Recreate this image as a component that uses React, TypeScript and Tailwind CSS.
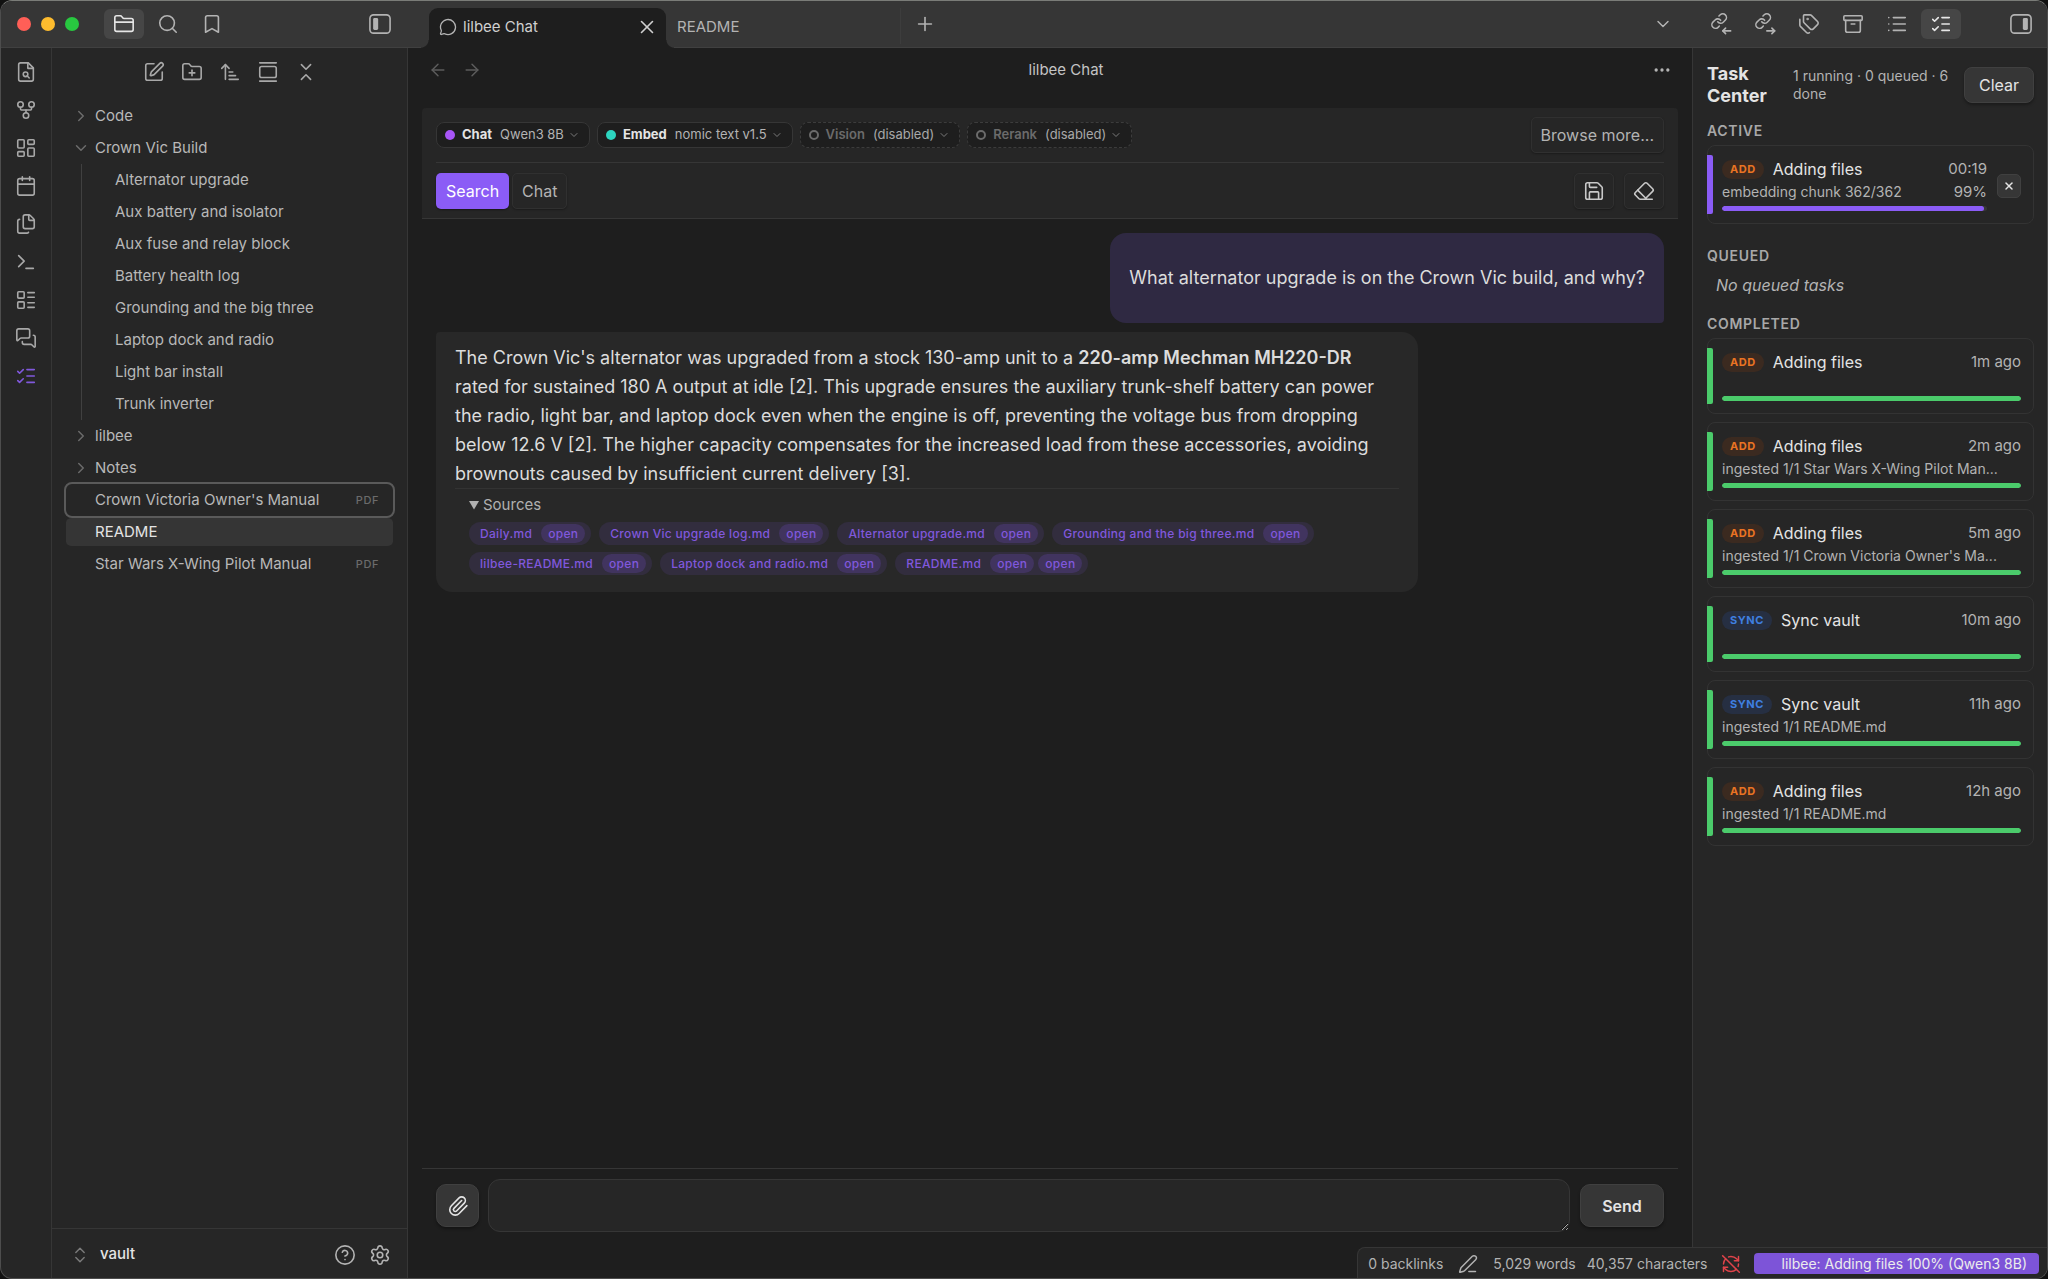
import type { ReactNode } from "react";
import {
  Archive,
  ArrowLeft,
  ArrowRight,
  ArrowUpNarrowWide,
  Bookmark,
  Calendar,
  ChevronDown,
  ChevronRight,
  ChevronsDownUp,
  ChevronsUpDown,
  CircleHelp,
  Ellipsis,
  Eraser,
  Files,
  FolderClosed,
  FolderPlus,
  GalleryVertical,
  GitFork,
  LayoutDashboard,
  LayoutList,
  List,
  ListChecks,
  MessageCircle,
  MessagesSquare,
  Paperclip,
  PenLine,
  Plus,
  RefreshCwOff,
  Save,
  Search,
  Settings,
  SquarePen,
  Tags,
  Terminal,
  X,
} from "lucide-react";

const icon = { size: 22, strokeWidth: 1.75 };

function Svg({ children }: { children: ReactNode }) {
  return (
    <svg
      width="22"
      height="22"
      viewBox="0 0 24 24"
      fill="none"
      stroke="currentColor"
      strokeWidth="1.75"
      strokeLinecap="round"
      strokeLinejoin="round"
      aria-hidden="true"
    >
      {children}
    </svg>
  );
}

function SidebarToggle({ side }: { side: "left" | "right" }) {
  return (
    <Svg>
      <rect x="1" y="2" width="22" height="20" rx="4" />
      <rect x={side === "left" ? 4.5 : 14} y="5.5" width="5.5" height="13" rx="1.5" fill="currentColor" stroke="none" />
    </Svg>
  );
}

function LinkArrow({ direction }: { direction: "in" | "out" }) {
  return (
    <Svg>
      <g transform="translate(0.4 -0.8) scale(0.8)" strokeWidth="2.1">
        <path d="M10 13a5 5 0 0 0 7.54.54l3-3a5 5 0 0 0-7.07-7.07l-1.72 1.71" />
        <path d="M14 11a5 5 0 0 0-7.54-.54l-3 3a5 5 0 0 0 7.07 7.07l1.71-1.71" />
      </g>
      <path d="M14 19.5h8.5" />
      <path d={direction === "in" ? "m17 16.5-3 3 3 3" : "m19.5 16.5 3 3-3 3"} />
    </Svg>
  );
}

function FileSearch() {
  return (
    <Svg>
      <path d="M14.5 2H6a2 2 0 0 0-2 2v16a2 2 0 0 0 2 2h12a2 2 0 0 0 2-2V7.5z" />
      <path d="M14 2v6h6" />
      <circle cx="11.5" cy="14.5" r="2.5" />
      <path d="M13.4 16.4 15.5 18.5" />
    </Svg>
  );
}

function IconButton({ label, active, children }: { label: string; active?: boolean; children: ReactNode }) {
  return (
    <button
      type="button"
      aria-label={label}
      className={
        active
          ? "flex h-[30px] w-10 items-center justify-center rounded-md bg-[#464646] text-[#e6e6e6]"
          : "flex h-[30px] w-10 items-center justify-center rounded-md text-[#b3b3b3]"
      }
    >
      {children}
    </button>
  );
}

function TitleBar() {
  return (
    <header className="flex h-[47px] shrink-0 border-b border-[#404040] bg-[#363636]">
      <div className="flex w-[406px] shrink-0 items-center justify-between pr-[7px] pb-px pl-4">
        <div className="flex items-center">
          <div className="mr-[25px] flex gap-[10px]">
            <span className="size-[14px] rounded-full bg-[#ff5f57]" />
            <span className="size-[14px] rounded-full bg-[#febc2e]" />
            <span className="size-[14px] rounded-full bg-[#28c840]" />
          </div>
          <div className="flex gap-1">
            <IconButton label="Files" active><FolderClosed {...icon} /></IconButton>
            <IconButton label="Search"><Search {...icon} /></IconButton>
            <IconButton label="Bookmarks"><Bookmark {...icon} /></IconButton>
          </div>
        </div>
        <IconButton label="Collapse sidebar"><SidebarToggle side="left" /></IconButton>
      </div>
      <div className="flex min-w-0 flex-1 items-start pl-[22px]">
        <div className="relative mt-[7px] flex h-10 w-[237px] items-center rounded-t-[9px] bg-[#1e1e1e] pr-2 pb-[2px] pl-[10px] text-[#d0d0d0]">
          <span className="absolute bottom-0 -left-2 size-2 bg-[radial-gradient(circle_at_0_0,transparent_7px,#1e1e1e_8px)]" />
          <span className="absolute -right-2 bottom-0 size-2 bg-[radial-gradient(circle_at_100%_0,transparent_7px,#1e1e1e_8px)]" />
          <MessageCircle size={18} strokeWidth={1.75} className="mr-[6px] text-[#b3b3b3]" />
          <span className="flex-1">lilbee Chat</span>
          <button type="button" aria-label="Close tab"><X size={22} strokeWidth={1.75} /></button>
        </div>
        <button type="button" className="mt-[7px] flex h-9 w-[235px] items-center border-r border-[#3d3d3d] pt-[2px] pl-[11px] text-[#b3b3b3]">
          README
        </button>
        <div className="mt-2 ml-1">
          <IconButton label="New tab"><Plus {...icon} /></IconButton>
        </div>
      </div>
      <div className="flex shrink-0 items-center pr-[6px] pb-px">
        <div className="mr-[18px]"><IconButton label="Tab list"><ChevronDown size={20} strokeWidth={1.75} /></IconButton></div>
        <div className="flex gap-1">
          <IconButton label="Backlinks"><LinkArrow direction="in" /></IconButton>
          <IconButton label="Outgoing links"><LinkArrow direction="out" /></IconButton>
          <IconButton label="Tags"><Tags {...icon} /></IconButton>
          <IconButton label="Archive"><Archive {...icon} /></IconButton>
          <IconButton label="Outline"><List {...icon} /></IconButton>
          <IconButton label="Task Center" active><ListChecks {...icon} /></IconButton>
        </div>
        <div className="ml-10"><IconButton label="Collapse right sidebar"><SidebarToggle side="right" /></IconButton></div>
      </div>
    </header>
  );
}

function Rail() {
  const items: [string, ReactNode][] = [
    ["Quick switcher", <FileSearch />],
    ["Graph view", <GitFork {...icon} />],
    ["Canvas", <LayoutDashboard {...icon} />],
    ["Daily note", <Calendar {...icon} />],
    ["Templates", <Files {...icon} />],
    ["Command palette", <Terminal {...icon} />],
    ["Bases", <LayoutList {...icon} />],
    ["Chat", <MessagesSquare {...icon} />],
  ];
  return (
    <nav className="flex w-[51px] shrink-0 flex-col items-center gap-4 border-r border-[#363636] pt-[13px] text-[#a8a8a8]">
      {items.map(([label, glyph]) => (
        <button key={label} type="button" aria-label={label}>{glyph}</button>
      ))}
      <button type="button" aria-label="Task Center" className="text-[#8058dc]"><ListChecks {...icon} /></button>
    </nav>
  );
}

function TreeRow({ name, kind, tag, state }: { name: string; kind?: "open" | "closed"; tag?: string; state?: "focused" | "active" }) {
  const look =
    state === "focused"
      ? "flex h-8 w-full items-center rounded-md pr-[14px] text-left outline-2 outline-[#5a5a5a]"
      : state === "active"
        ? "flex h-8 w-full items-center rounded-md border-y-2 border-transparent bg-[#353535] bg-clip-padding pr-[14px] text-left text-[#e4e4e4]"
        : "flex h-8 w-full items-center pr-[14px] text-left";
  return (
    <button type="button" className={look}>
      <span className="flex w-[29px] shrink-0 justify-center pl-px text-[#6b6b6b]">
        {kind === "open" && <ChevronDown size={18} strokeWidth={2} />}
        {kind === "closed" && <ChevronRight size={18} strokeWidth={2} />}
      </span>
      <span className="flex-1">{name}</span>
      {tag && <span className="text-[11px] font-medium tracking-wider text-[#6b6b6b]">{tag}</span>}
    </button>
  );
}

const crownVicNotes = [
  "Alternator upgrade",
  "Aux battery and isolator",
  "Aux fuse and relay block",
  "Battery health log",
  "Grounding and the big three",
  "Laptop dock and radio",
  "Light bar install",
  "Trunk inverter",
];

function FileExplorer() {
  return (
    <aside className="flex w-[356px] shrink-0 flex-col border-r border-[#363636]">
      <div className="flex justify-center gap-4 pt-[13px] text-[#a8a8a8]">
        <button type="button" aria-label="New note"><SquarePen {...icon} /></button>
        <button type="button" aria-label="New folder"><FolderPlus {...icon} /></button>
        <button type="button" aria-label="Sort order"><ArrowUpNarrowWide {...icon} /></button>
        <button type="button" aria-label="Auto-reveal file"><GalleryVertical {...icon} /></button>
        <button type="button" aria-label="Collapse all"><ChevronsDownUp {...icon} /></button>
      </div>
      <div className="flex-1 px-[14px] pt-[17px] text-[#b8b8b8]">
        <TreeRow name="Code" kind="closed" />
        <TreeRow name="Crown Vic Build" kind="open" />
        <div className="ml-[15px] border-l border-[#404040]">
          {crownVicNotes.map((note) => (
            <button key={note} type="button" className="flex h-8 w-full items-center pl-[33px] text-left">{note}</button>
          ))}
        </div>
        <TreeRow name="lilbee" kind="closed" />
        <TreeRow name="Notes" kind="closed" />
        <TreeRow name="Crown Victoria Owner's Manual" tag="PDF" state="focused" />
        <TreeRow name="README" state="active" />
        <TreeRow name="Star Wars X-Wing Pilot Manual" tag="PDF" />
      </div>
      <div className="flex h-[50px] shrink-0 items-center border-t border-[#363636] pt-[2px] pr-4 pl-[18px]">
        <button type="button" className="flex flex-1 items-center gap-[10px] font-medium text-[#e4e4e4]">
          <ChevronsUpDown size={20} strokeWidth={1.75} className="text-[#7a7a7a]" />
          vault
        </button>
        <div className="flex gap-[13px] text-[#b3b3b3]">
          <button type="button" aria-label="Help"><CircleHelp {...icon} /></button>
          <button type="button" aria-label="Settings"><Settings {...icon} /></button>
        </div>
      </div>
    </aside>
  );
}

function ModelChip({ role, model, dot }: { role: string; model: string; dot?: "purple" | "teal" }) {
  return (
    <button
      type="button"
      className={
        dot
          ? "flex h-[26px] items-center rounded-lg border border-[#363636] bg-[#1e1e1e] pr-[9px] pl-2 text-[13px] text-[#b3b3b3]"
          : "flex h-[26px] items-center rounded-lg border border-dashed border-[#3c3c3c] bg-[#1e1e1e] pr-[9px] pl-2 text-[13px] text-[#a8a8a8]"
      }
    >
      <span
        className={
          dot === "purple"
            ? "size-[10px] rounded-full bg-[#a855f7]"
            : dot === "teal"
              ? "size-[10px] rounded-full bg-[#2dd4bf]"
              : "size-[10px] rounded-full border-2 border-[#6b6b6b]"
        }
      />
      <span className={dot ? "mr-2 ml-[7px] font-bold text-[#e4e4e4]" : "mr-2 ml-[7px] font-semibold text-[#6b6b6b]"}>{role}</span>
      {model}
      <ChevronDown size={12} strokeWidth={2} className="ml-1 text-[#7a7a7a]" />
    </button>
  );
}

function Toolbar() {
  const flat = "rounded-[5px] border border-[#303030] shadow-[0_1px_2px_rgba(0,0,0,0.3)]";
  return (
    <div className="mx-[14px] rounded-t-sm border-b border-[#363636] bg-[#262626] px-[14px]">
      <div className="flex h-[55px] items-center gap-[7px] border-b border-[#363636]">
        <ModelChip role="Chat" model="Qwen3 8B" dot="purple" />
        <ModelChip role="Embed" model="nomic text v1.5" dot="teal" />
        <ModelChip role="Vision" model="(disabled)" />
        <ModelChip role="Rerank" model="(disabled)" />
        <button type="button" className={`${flat} ml-auto h-9 px-[9px] text-base text-[#b3b3b3]`}>Browse more...</button>
      </div>
      <div className="flex h-[55px] items-center gap-[3px]">
        <button type="button" className="h-9 rounded-[5px] bg-[#8b5cf6] px-[10px] text-base text-white shadow-[0_1px_2px_rgba(0,0,0,0.4)]">Search</button>
        <button type="button" className={`${flat} h-9 px-[9px] text-base text-[#b3b3b3]`}>Chat</button>
        <div className="ml-auto flex gap-[10px] text-[#c8c8c8]">
          <button type="button" aria-label="Save" className={`${flat} flex h-9 w-10 items-center justify-center`}><Save {...icon} /></button>
          <button type="button" aria-label="Clear chat" className={`${flat} flex h-9 w-10 items-center justify-center`}><Eraser {...icon} /></button>
        </div>
      </div>
    </div>
  );
}

const sources = [
  { name: "Daily.md", opens: 1 },
  { name: "Crown Vic upgrade log.md", opens: 1 },
  { name: "Alternator upgrade.md", opens: 1 },
  { name: "Grounding and the big three.md", opens: 1 },
  { name: "lilbee-README.md", opens: 1 },
  { name: "Laptop dock and radio.md", opens: 1 },
  { name: "README.md", opens: 2 },
];

function Conversation() {
  return (
    <div className="flex flex-1 flex-col px-7 pt-[14px] text-[#dcdcdc]">
      <div className="self-end rounded-2xl rounded-br-sm bg-[#2f2942] px-[19px] py-[31px] text-lg leading-7">
        What alternator upgrade is on the Crown Vic build, and why?
      </div>
      <div className="mt-[9px] w-[983px] max-w-[80%] rounded-2xl rounded-tl-sm bg-[#282828] px-[19px] pt-[11px] pb-[17px]">
        <p className="text-lg leading-[29px]">
          The Crown Vic's alternator was upgraded from a stock 130-amp unit to a <strong className="font-semibold">220-amp Mechman MH220-DR</strong> rated for sustained 180 A output at idle [2]. This upgrade ensures the auxiliary trunk-shelf battery can power the radio, light bar, and laptop dock even when the engine is off, preventing the voltage bus from dropping below 12.6 V [2]. The higher capacity compensates for the increased load from these accessories, avoiding brownouts caused by insufficient current delivery [3].
        </p>
        <details open className="border-t border-[#333333] px-[14px] pt-[5px]">
          <summary className="flex h-[22px] items-center gap-1 text-[15px] text-[#b0b0b0]">
            <svg width="10" height="10" viewBox="0 0 10 10" fill="currentColor" aria-hidden="true"><path d="M0 1h10L5 9.5z" /></svg>
            Sources
          </summary>
          <div className="mt-[6px] flex flex-wrap gap-x-2 gap-y-[7px] text-[12px] font-medium tracking-wide text-[#8058dc]">
            {sources.map((source) => (
              <span key={source.name} className="flex h-[23px] items-center gap-1 rounded-full bg-[#322d3e] pr-[6px] pl-[11px]">
                <a href="#source" className="mr-[5px]">{source.name}</a>
                {Array.from({ length: source.opens }, (_, i) => (
                  <button key={i} type="button" className="flex h-[19px] items-center rounded-full bg-[#41345f] px-[7px] tracking-wide">open</button>
                ))}
              </span>
            ))}
          </div>
        </details>
      </div>
    </div>
  );
}

function Composer() {
  const raised = "h-[43px] rounded-[10px] border border-[#404040] bg-[#363636] text-[#e4e4e4] shadow-[0_2px_3px_rgba(0,0,0,0.35)]";
  return (
    <form className="mx-[14px] mb-[46px] flex items-center border-t border-[#363636] px-[14px] pt-[10px]">
      <button type="button" aria-label="Attach file" className={`${raised} flex w-[43px] items-center justify-center`}><Paperclip {...icon} /></button>
      <textarea aria-label="Message" className="mr-[10px] ml-[9px] h-[53px] flex-1 resize rounded-xl border border-[#363636] bg-[#262626] px-3 py-2" />
      <button type="button" className={`${raised} w-[84px] text-base font-semibold`}>Send</button>
    </form>
  );
}

function ChatPane() {
  return (
    <main className="flex min-w-0 flex-1 flex-col bg-[#1e1e1e]">
      <div className="flex h-[60px] shrink-0 items-start justify-between px-5 pt-[12px]">
        <div className="flex w-[92px] gap-[14px] text-[#5c5c5c]">
          <button type="button" aria-label="Back"><ArrowLeft size={20} strokeWidth={1.75} /></button>
          <button type="button" aria-label="Forward"><ArrowRight size={20} strokeWidth={1.75} /></button>
        </div>
        <h1 className="leading-5 text-[#c4c4c4]">lilbee Chat</h1>
        <div className="flex w-[60px] justify-end text-[#b3b3b3]">
          <button type="button" aria-label="More options"><Ellipsis size={20} strokeWidth={2} /></button>
        </div>
      </div>
      <Toolbar />
      <Conversation />
      <Composer />
    </main>
  );
}

type Task = { kind: "ADD" | "SYNC"; title: string; time: string; detail?: string };

const completed: Task[] = [
  { kind: "ADD", title: "Adding files", time: "1m ago" },
  { kind: "ADD", title: "Adding files", time: "2m ago", detail: "ingested 1/1 Star Wars X-Wing Pilot Man..." },
  { kind: "ADD", title: "Adding files", time: "5m ago", detail: "ingested 1/1 Crown Victoria Owner's Ma..." },
  { kind: "SYNC", title: "Sync vault", time: "10m ago" },
  { kind: "SYNC", title: "Sync vault", time: "11h ago", detail: "ingested 1/1 README.md" },
  { kind: "ADD", title: "Adding files", time: "12h ago", detail: "ingested 1/1 README.md" },
];

function TaskCard({ task, percent }: { task: Task; percent?: number }) {
  const active = percent !== undefined;
  return (
    <li className="flex rounded-lg border border-[#333333]">
      <span className={active ? "my-[9px] -ml-px w-[6px] shrink-0 rounded-r-xs bg-[#8b5cf6]" : "my-[9px] -ml-px w-[6px] shrink-0 rounded-r-xs bg-[#4bcb6b]"} />
      <div className={active ? "min-w-0 flex-1 py-3 pr-[10px] pl-[9px]" : "min-w-0 flex-1 py-3 pr-3 pl-[9px]"}>
        <div className="flex h-[22px] items-center">
          <span
            className={
              task.kind === "ADD"
                ? "rounded-full bg-[#3b2a20] px-2 text-[11px] leading-[19px] font-bold tracking-wider text-[#ea7423]"
                : "rounded-full bg-[#262f42] px-2 text-[11px] leading-[19px] font-bold tracking-wider text-[#3f7fe0]"
            }
          >
            {task.kind}
          </span>
          <span className="ml-[9px] flex-1 text-base text-[#e4e4e4]">{task.title}</span>
          <span className="text-[15px] text-[#b3b3b3]">{task.time}</span>
        </div>
        {task.detail ? (
          <div className="mt-[2px] flex h-5 items-center justify-between text-sm text-[#b3b3b3]">
            <span className="truncate">{task.detail}</span>
            {active && <span className="text-[15px]">{percent}%</span>}
          </div>
        ) : (
          <div className="h-[19px]" />
        )}
        <div className="mt-1 h-[5px] overflow-hidden rounded-full bg-[#363636]">
          <div
            className={active ? "h-full rounded-full bg-[#8b5cf6]" : "h-full rounded-full bg-[#4bcb6b]"}
            style={{ width: `${percent ?? 100}%` }}
          />
        </div>
      </div>
      {active && (
        <button type="button" aria-label="Cancel task" className="mt-7 mr-3 flex size-6 items-center justify-center rounded-[5px] border border-[#404040] bg-[#363636] text-[#e4e4e4]">
          <X size={12} strokeWidth={3} />
        </button>
      )}
    </li>
  );
}

function TaskCenter() {
  const label = "text-sm leading-[18px] font-semibold tracking-wider text-[#a8a8a8]";
  return (
    <aside className="flex w-[355px] shrink-0 flex-col border-l border-[#363636] pr-[13px] pl-[14px]">
      <div className="flex items-center pt-[15px]">
        <h2 className="w-[86px] shrink-0 pr-4 text-lg leading-[22px] font-bold text-[#e4e4e4]">Task Center</h2>
        <p className="flex-1 text-sm leading-[18px] text-[#b3b3b3]">1 running · 0 queued · 6 done</p>
        <button type="button" className="h-9 w-[70px] shrink-0 rounded-lg border border-[#404040] bg-[#363636] text-base text-[#e4e4e4] shadow-[0_2px_3px_rgba(0,0,0,0.3)]">Clear</button>
      </div>
      <h3 className={`${label} mt-[15px]`}>ACTIVE</h3>
      <ul className="mt-[5px]">
        <TaskCard task={{ kind: "ADD", title: "Adding files", time: "00:19", detail: "embedding chunk 362/362" }} percent={99} />
      </ul>
      <h3 className={`${label} mt-[23px]`}>QUEUED</h3>
      <p className="mt-[9px] pl-[9px] text-base leading-[22px] text-[#b3b3b3] italic">No queued tasks</p>
      <h3 className={`${label} mt-[19px]`}>COMPLETED</h3>
      <ul className="mt-[5px] flex flex-col gap-2">
        {completed.map((task) => (
          <TaskCard key={task.time} task={task} />
        ))}
      </ul>
    </aside>
  );
}

function StatusBar() {
  return (
    <footer className="absolute right-0 bottom-0 flex h-[31px] items-center rounded-tl-lg border-t border-l border-[#363636] bg-[#262626] pt-px pr-2 pl-[10px] text-sm text-[#b3b3b3]">
      <span>0 backlinks</span>
      <PenLine size={20} strokeWidth={1.75} className="mx-[15px]" />
      <span>5,029 words</span>
      <span className="ml-[11px]">40,357 characters</span>
      <RefreshCwOff size={20} strokeWidth={1.75} className="mx-[13px] text-[#e0434a]" />
      <span className="flex h-[21px] items-center rounded bg-[#7d54d8] pr-3 pl-[28px] text-[#ececec]">lilbee: Adding files 100% (Qwen3 8B)</span>
    </footer>
  );
}

export default function App() {
  return (
    <div className="h-screen bg-[#111111] font-['Inter',sans-serif] text-[15px]">
      <div className="relative flex h-full flex-col overflow-hidden rounded-xl border border-[#4d4d4d] border-t-[#7a7c78] bg-[#262626]">
        <TitleBar />
        <div className="flex min-h-0 flex-1">
          <Rail />
          <FileExplorer />
          <ChatPane />
          <TaskCenter />
        </div>
        <StatusBar />
      </div>
    </div>
  );
}
